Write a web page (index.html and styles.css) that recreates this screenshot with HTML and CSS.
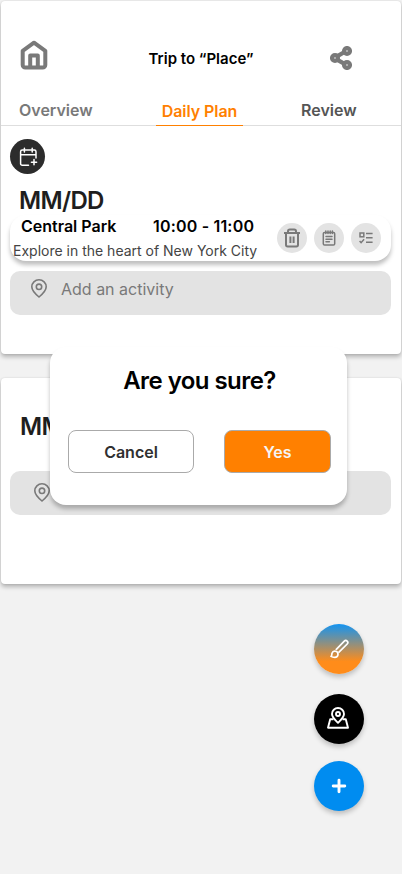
FILE: index.html
```
<!DOCTYPE html>
<html lang="en">
<head>
<meta charset="utf-8">
<meta name="viewport" content="width=device-width, initial-scale=1">
<title>Trip planner</title>
<link rel="stylesheet" href="styles.css">
</head>
<body>
<main class="screen">
  <section class="card card-main">
    <header class="topbar">
      <svg class="home" viewBox="0 0 28 30" fill="none" stroke="#797979" stroke-width="4" stroke-linejoin="round"><path d="M2.700 10.800 14 2.700l11.300 8.100V25a2.600 2.600 0 0 1-2.600 2.600H5.300A2.600 2.600 0 0 1 2.700 25Z"/><path d="M10.200 27V15.500h7.600v11.500"/></svg>
      <h1 class="title">Trip to “Place”</h1>
      <svg class="share" viewBox="0 0 22 24" fill="none" stroke="#797979" stroke-width="4.300"><path d="M7 10.300 14.500 6M7 13.700l7.500 4.100"/><circle cx="5" cy="12" r="2.900"/><circle cx="17" cy="5" r="2.900"/><circle cx="17" cy="19" r="2.900"/></svg>
    </header>
    <nav class="tabs">
      <span class="tab overview">Overview</span>
      <span class="tab daily">Daily Plan</span>
      <span class="tab review">Review</span>
    </nav>
    <div class="add-day">
      <svg width="20" height="20" viewBox="0 0 20 20" fill="none" stroke="#fff" stroke-width="1.5" stroke-linecap="round" stroke-linejoin="round"><path d="M10.500 18.300H4.200a1.600 1.600 0 0 1-1.600-1.600V4.700a1.600 1.600 0 0 1 1.600-1.600h12.200A1.600 1.600 0 0 1 18 4.700V11M2.600 7.700H18M6.400 1.300v3.600M14.200 1.300v3.600M16 12.600v5.200M13.400 15.200h5.200"/></svg>
    </div>
    <h2 class="date">MM/DD</h2>
    <article class="activity">
      <div class="info">
        <div class="place-row"><span class="place">Central Park</span><span class="time">10:00 - 11:00</span></div>
        <p class="note">Explore in the heart of New York City</p>
      </div>
      <div class="actions">
        <span class="action"><svg width="18" height="20" viewBox="0 0 18 20" fill="none" stroke="#797979" stroke-width="2"><path d="M1 5h16M5 4.600V3.400A1.800 1.800 0 0 1 6.800 1.600h4.400A1.800 1.800 0 0 1 13 3.400v1.200M3 5v11.800A1.600 1.600 0 0 0 4.600 18.400h8.800a1.600 1.600 0 0 0 1.600-1.600V5M7.400 8.500V15M10.600 8.500V15"/></svg></span>
        <span class="action"><svg width="14" height="16" viewBox="0 0 14 16" fill="none" stroke="#797979" stroke-width="1.5" stroke-linecap="round" stroke-linejoin="round"><rect x="1.300" y="2.400" width="11.400" height="12.600" rx="1.300"/><path d="M3.800 1v2.600M6 1v2.600M8.200 1v2.600M10.400 1v2.600M4 6.600h6M4 9.200h6M4 11.800h3.400"/></svg></span>
        <span class="action"><svg width="14" height="12" viewBox="0 0 14 12" fill="none" stroke="#797979" stroke-width="1.500"><rect x="1" y="1" width="3.800" height="3.800"/><path d="m.6 9 1.500 1.700 3-3.400M7 1.500h6.600M7 5.800h6.600M7 10.200h6.600"/></svg></span>
      </div>
    </article>
    <div class="add-activity">
      <svg class="pin" viewBox="0 0 16 19" fill="none" stroke="#797979" stroke-width="1.6"><path d="M8 18C4.600 15.200.8 11.600.8 7.800a7.200 7 0 0 1 14.400 0C15.200 11.600 11.400 15.200 8 18Z"/><circle cx="8" cy="7.800" r="2.700"/></svg>
      <span>Add an activity</span>
    </div>
  </section>

  <section class="card card-next">
    <h2 class="date">MM/DD</h2>
    <div class="add-activity">
      <svg class="pin" viewBox="0 0 16 19" fill="none" stroke="#797979" stroke-width="1.6"><path d="M8 18C4.600 15.200.8 11.600.8 7.800a7.200 7 0 0 1 14.400 0C15.200 11.600 11.400 15.200 8 18Z"/><circle cx="8" cy="7.800" r="2.700"/></svg>
    </div>
  </section>

  <div class="fabs">
    <span class="fab fab-brush"><svg width="20" height="20" viewBox="0 0 20 20" fill="none" stroke="#fff" stroke-width="1.700" stroke-linecap="round" stroke-linejoin="round"><path d="m7.300 10.400 8-8.200a2 2 0 0 1 2.900 2.800l-8.200 8.200"/><path d="M2 17.400c1.200-.4.500-1.800 1-3.200a3.100 3.100 0 1 1 2.900 4.200c-1.600 0-2.700-.2-3.900-1Z"/></svg></span>
    <span class="fab fab-map"><svg width="22" height="22" viewBox="0 0 22 22" fill="none" stroke="#fff" stroke-width="1.900" stroke-linejoin="round"><path d="M11 15.800C8.300 13 5 10.300 5 6.900a6 5.900 0 0 1 12 0c0 3.400-3.300 6.100-6 8.900Z"/><circle cx="11" cy="7" r="2"/><path d="M6.500 12.300H3.200L1 20.700h20l-2.200-8.400h-3.300"/></svg></span>
    <span class="fab fab-add"><svg width="16" height="16" viewBox="0 0 16 16" fill="none" stroke="#fff" stroke-width="2.900" stroke-linecap="round"><path d="M8 2.200v11.600M2.200 8h11.600"/></svg></span>
  </div>

  <div class="dialog">
    <h2 class="question">Are you sure?</h2>
    <div class="buttons">
      <button class="btn cancel">Cancel</button>
      <button class="btn yes">Yes</button>
    </div>
  </div>
</main>
</body>
</html>
```

FILE: styles.css
```
* { box-sizing: border-box; }
body { margin: 0; background: #f2f2f2; font-family: Inter, "Liberation Sans", sans-serif; color: #000; }
h1, h2, p { margin: 0; }
svg { display: block; flex: none; }
.screen { position: relative; width: 402px; height: 874px; overflow: hidden; padding: 1px; }
.card { background: #fff; border-radius: 4px; box-shadow: 0 3px 4px rgba(0, 0, 0, .25), 0 0 2px rgba(0, 0, 0, .12); }
.card-main { height: 352.5px; }
.card-next { height: 205.5px; margin-top: 24.5px; padding-top: 34px; }
.topbar { display: flex; align-items: center; justify-content: space-between; height: 86px; padding: 28px 49px 0 19px; }
.home { width: 28px; height: 30px; margin-top: -6px; }
.share { width: 22px; height: 24px; }
.title { font-size: 15px; font-weight: 600; line-height: 20px; margin: 2px 0 0 24px; white-space: nowrap; }
.tabs { display: flex; height: 39px; border-bottom: 1px solid #dedede; font-size: 16px; font-weight: 600; line-height: 20px; }
.tab { height: 39px; padding-top: 13px; }
.overview { width: 155px; padding-left: 18px; color: #797979; }
.daily { width: 87px; padding-top: 14px; text-align: center; letter-spacing: -.05px; color: #ff8000; border-bottom: 1px solid #ff8000; }
.review { padding-left: 58px; color: #555; }
.add-day { display: grid; place-items: center; width: 35px; height: 35px; margin: 13px 0 0 9px; border-radius: 50%; background: #2c2c2c; }
.date { font-size: 24px; font-weight: 600; line-height: 30px; letter-spacing: -.65px; color: #1e1e1e; margin: 12px 0 0 18px; }
.activity { display: flex; justify-content: space-between; width: 381px; height: 46px; margin: -1px 0 0 9px; padding: 0 10px 0 3px; border-radius: 16px; background: #fff; box-shadow: 0 4px 4px rgba(0, 0, 0, .25); }
.place-row { display: flex; font-size: 16px; font-weight: 600; line-height: 20px; margin: 1px 0 0 8px; }
.place { width: 132px; }
.time { letter-spacing: .18px; }
.note { font-size: 14px; line-height: 18px; margin-top: 6px; color: #444; white-space: nowrap; }
.actions { display: flex; gap: 7px; margin-top: 8px; }
.action { display: grid; place-items: center; width: 30px; height: 30px; border-radius: 50%; background: #e3e3e3; }
.add-activity { display: flex; gap: 14px; width: 381px; height: 44px; margin: 10px 0 0 9px; padding: 8px 0 0 21px; border-radius: 10px; background: #e3e3e3; color: #797979; font-size: 16px; line-height: 21px; }
.pin { width: 16px; height: 19px; }
.card-next .date { margin: 0 0 0 19px; }
.card-next .add-activity { margin-top: 29px; padding: 12px 0 0 24px; }
.fabs { position: absolute; left: 314px; top: 624px; display: flex; flex-direction: column; }
.fab { display: grid; place-items: center; width: 50px; height: 50px; border-radius: 50%; box-shadow: 0 3px 5px rgba(0, 0, 0, .22); }
.fab-brush { background: linear-gradient(#1394f2 0%, #ff8c1a 75%); }
.fab-map { margin-top: 20px; background: #000; }
.fab-map svg { margin: -2px 2px 0 0; }
.fab-add { margin-top: 17px; background: #008cf0; }
.dialog { position: absolute; left: 50px; top: 347px; width: 297px; height: 158px; padding: 19px 16px 0 18px; border-radius: 16px; background: #fff; box-shadow: 0 4px 4px rgba(0, 0, 0, .25); }
.question { font-size: 24px; font-weight: 600; line-height: 30px; letter-spacing: -.55px; text-align: center; }
.buttons { display: flex; justify-content: space-between; margin-top: 34px; }
.btn { height: 43px; padding: 0; border: 1px solid #aaa; border-radius: 8px; font: 600 16px/20px Inter, sans-serif; }
.cancel { width: 126px; color: #303030; background: #fff; }
.yes { width: 107px; color: #f5f5f5; background: #ff8000; }
```
